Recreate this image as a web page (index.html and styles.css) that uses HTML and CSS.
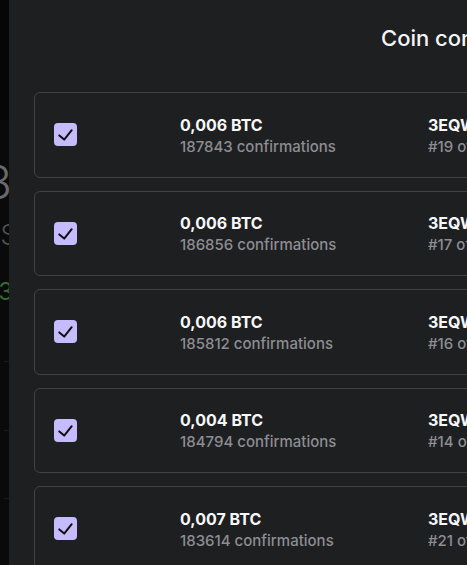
FILE: index.html
```html
<!DOCTYPE html>
<html>
<head>
<meta charset="utf-8">
<link rel="stylesheet" href="styles.css">
</head>
<body>
<div class="page">
  <div class="backdrop">
    <div class="bd-top"></div>
    <div class="bd-row bd-big"><span>183</span></div>
    <div class="bd-row bd-sub"><span>1.S</span></div>
    <div class="bd-row bd-green"><span>+3</span></div>
    <div class="bd-line l1"></div>
    <div class="bd-line l2"></div>
    <div class="bd-line l3"></div>
  </div>
  <div class="panel">
    <h1 class="title">Coin control</h1>
    <div class="list">
      <div class="card">
        <span class="check"><svg viewBox="0 0 23 23" width="23" height="23"><path d="M5.3 12.4 L10.2 16.6 L17.7 7.2" fill="none" stroke="#111" stroke-width="2" stroke-linecap="round" stroke-linejoin="round"/></svg></span>
        <div class="col amount"><div class="strong">0,006 BTC</div><div class="muted">187843 confirmations</div></div>
        <div class="col addr"><div class="strong">3EQWxk9n</div><div class="muted">#19 of 24</div></div>
      </div>
      <div class="card">
        <span class="check"><svg viewBox="0 0 23 23" width="23" height="23"><path d="M5.3 12.4 L10.2 16.6 L17.7 7.2" fill="none" stroke="#111" stroke-width="2" stroke-linecap="round" stroke-linejoin="round"/></svg></span>
        <div class="col amount"><div class="strong">0,006 BTC</div><div class="muted">186856 confirmations</div></div>
        <div class="col addr"><div class="strong">3EQWxk9n</div><div class="muted">#17 of 24</div></div>
      </div>
      <div class="card">
        <span class="check"><svg viewBox="0 0 23 23" width="23" height="23"><path d="M5.3 12.4 L10.2 16.6 L17.7 7.2" fill="none" stroke="#111" stroke-width="2" stroke-linecap="round" stroke-linejoin="round"/></svg></span>
        <div class="col amount"><div class="strong">0,006 BTC</div><div class="muted">185812 confirmations</div></div>
        <div class="col addr"><div class="strong">3EQWxk9n</div><div class="muted">#16 of 24</div></div>
      </div>
      <div class="card">
        <span class="check"><svg viewBox="0 0 23 23" width="23" height="23"><path d="M5.3 12.4 L10.2 16.6 L17.7 7.2" fill="none" stroke="#111" stroke-width="2" stroke-linecap="round" stroke-linejoin="round"/></svg></span>
        <div class="col amount"><div class="strong">0,004 BTC</div><div class="muted">184794 confirmations</div></div>
        <div class="col addr"><div class="strong">3EQWxk9n</div><div class="muted">#14 of 24</div></div>
      </div>
      <div class="card">
        <span class="check"><svg viewBox="0 0 23 23" width="23" height="23"><path d="M5.3 12.4 L10.2 16.6 L17.7 7.2" fill="none" stroke="#111" stroke-width="2" stroke-linecap="round" stroke-linejoin="round"/></svg></span>
        <div class="col amount"><div class="strong">0,007 BTC</div><div class="muted">183614 confirmations</div></div>
        <div class="col addr"><div class="strong">3EQWxk9n</div><div class="muted">#21 of 24</div></div>
      </div>
    </div>
  </div>
</div>
</body>
</html>
```

FILE: styles.css
```css
html, body {
  margin: 0;
  padding: 0;
  background: #080808;
  font-family: Inter, "Noto Sans", "Liberation Sans", sans-serif;
  overflow: hidden;
}
.page {
  display: flex;
  width: 467px;
  height: 565px;
  overflow: hidden;
}
.backdrop {
  width: 9px;
  flex: none;
  display: flex;
  flex-direction: column;
  background: #0a0a0a;
  overflow: hidden;
}
.bd-top {
  height: 120px;
  background: #060606;
  flex: none;
}
.bd-row {
  display: flex;
  justify-content: flex-end;
  white-space: nowrap;
  flex: none;
}
.bd-big {
  margin-top: 38px;
  font-size: 46px;
  line-height: 48px;
  font-weight: 300;
  color: #6a6a6a;
  margin-right: -3px;
}
.bd-sub {
  margin-top: 14px;
  font-size: 28px;
  line-height: 30px;
  font-weight: 300;
  color: #4e4e4e;
  margin-right: -9px;
}
.bd-green {
  margin-top: 28px;
  font-size: 24px;
  line-height: 28px;
  color: #2f6b2f;
  margin-right: -4px;
}
.bd-line {
  height: 1px;
  margin-left: 4px;
  background: #1a1a1a;
  flex: none;
}
.l1 { margin-top: 55px; }
.l2 { margin-top: 68px; }
.l3 { margin-top: 67px; }

.panel {
  flex: 1;
  background: #1e1f21;
  padding: 0 0 0 25px;
  min-width: 0;
}
.title {
  margin: 24px 0 0 347px;
  font-size: 22px;
  line-height: 28px;
  font-weight: 500;
  color: #f4f4f5;
  white-space: nowrap;
}
.list {
  margin-top: 40px;
  display: flex;
  flex-direction: column;
  gap: 13px;
  width: 640px;
}
.card {
  box-sizing: border-box;
  height: 85.5px;
  border: 1px solid #424245;
  border-radius: 6px;
  display: flex;
  align-items: center;
  padding-left: 19px;
}
.check {
  width: 23px;
  height: 23px;
  border-radius: 4px;
  background: #c6bbfd;
  display: block;
  flex: none;
}
.check svg { display: block; }
.col {
  display: flex;
  flex-direction: column;
  white-space: nowrap;
  line-height: 22px;
  padding-top: 2px;
}
.amount {
  margin-left: 103px;
  width: 248px;
}
.strong {
  color: #f7f7f8;
  font-size: 16px;
  font-weight: 700;
}
.muted {
  color: #8d8d92;
  font-size: 15px;
  font-weight: 500;
}
```
